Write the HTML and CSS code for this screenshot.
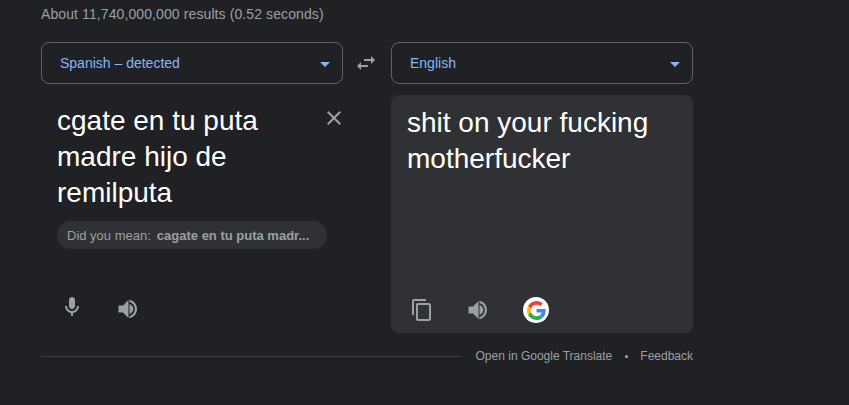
FILE: index.html
```html
<!DOCTYPE html>
<html>
<head>
  <title>Translate</title>
  <link rel="stylesheet" href="styles.css">
</head>
<body>
  <div class="container">
    <div class="result-stats">About 11,740,000,000 results (0.52 seconds)</div>

    <div class="lang-row">
      <div class="lang-box">
        <span>Spanish – detected</span>
        <span class="caret"></span>
      </div>
      <div class="swap">
        <svg width="24" height="24" viewBox="0 0 24 24"><path d="M6.99 11L3 15l3.99 4v-3H14v-2H6.99v-3zM21 9l-3.99-4v3H10v2h7.01v3L21 9z"/></svg>
      </div>
      <div class="lang-box">
        <span>English</span>
        <span class="caret"></span>
      </div>
    </div>

    <div class="panels">
      <div class="panel source">
        <div class="panel-text">
          <div class="big-text">cgate en tu puta madre hijo de remilputa</div>
          <button class="clear">
            <svg width="24" height="24" viewBox="0 0 24 24"><path d="M19 6.41L17.59 5 12 10.59 6.41 5 5 6.41 10.59 12 5 17.59 6.41 19 12 13.41 17.59 19 19 17.59 13.41 12z"/></svg>
          </button>
        </div>
        <div class="did-you-mean">
          <span class="dym-label">Did you mean:</span>
          <b class="dym-value">cagate en tu puta madr...</b>
        </div>
        <div class="panel-icons">
          <svg width="24" height="24" viewBox="0 0 24 24"><path d="M12 14c1.66 0 3-1.34 3-3V5c0-1.66-1.34-3-3-3S9 3.34 9 5v6c0 1.66 1.34 3 3 3z"/><path d="M17 11c0 2.76-2.24 5-5 5s-5-2.24-5-5H5c0 3.53 2.61 6.43 6 6.92V21h2v-3.08c3.39-.49 6-3.39 6-6.92h-2z"/></svg>
          <svg class="speaker" width="24" height="24" viewBox="0 0 24 24"><path d="M2.5 8.5v7h4.5l5.5 5.5V3L7 8.5H2.5zM13.5 7v10c2.2-.8 3.8-2.7 3.8-5s-1.6-4.2-3.8-5zM13.5 2.8v2.1c3.2.9 5.3 3.7 5.3 7.1s-2.1 6.2-5.3 7.1v2.1c4.4-.9 7.5-4.7 7.5-9.2s-3.1-8.3-7.5-9.2z"/></svg>
        </div>
      </div>

      <div class="panel target">
        <div class="big-text">shit on your fucking motherfucker</div>
        <div class="panel-icons">
          <svg width="24" height="24" viewBox="0 0 24 24"><path d="M16 1H4c-1.1 0-2 .9-2 2v14h2V3h12V1zm3 4H8c-1.1 0-2 .9-2 2v14c0 1.1.9 2 2 2h11c1.1 0 2-.9 2-2V7c0-1.1-.9-2-2-2zm0 16H8V7h11v14z"/></svg>
          <svg width="24" height="24" viewBox="0 0 24 24"><path d="M2.5 8.5v7h4.5l5.5 5.5V3L7 8.5H2.5zM13.5 7v10c2.2-.8 3.8-2.7 3.8-5s-1.6-4.2-3.8-5zM13.5 2.8v2.1c3.2.9 5.3 3.7 5.3 7.1s-2.1 6.2-5.3 7.1v2.1c4.4-.9 7.5-4.7 7.5-9.2s-3.1-8.3-7.5-9.2z"/></svg>
          <div class="g-badge">
            <svg width="19" height="19" viewBox="0 0 48 48">
              <path fill="#EA4335" d="M24 9.5c3.54 0 6.71 1.22 9.21 3.6l6.85-6.85C35.9 2.38 30.47 0 24 0 14.62 0 6.51 5.38 2.56 13.22l7.98 6.19C12.43 13.72 17.74 9.5 24 9.5z"/>
              <path fill="#4285F4" d="M46.98 24.55c0-1.57-.15-3.09-.38-4.55H24v9.02h12.94c-.58 2.96-2.26 5.48-4.78 7.18l7.73 6c4.51-4.18 7.09-10.36 7.09-17.65z"/>
              <path fill="#FBBC05" d="M10.53 28.59c-.48-1.45-.76-2.99-.76-4.59s.27-3.14.76-4.59l-7.98-6.19C.92 16.46 0 20.12 0 24c0 3.88.92 7.54 2.56 10.78l7.97-6.19z"/>
              <path fill="#34A853" d="M24 48c6.48 0 11.93-2.13 15.89-5.81l-7.73-6c-2.15 1.45-4.92 2.3-8.16 2.3-6.26 0-11.57-4.22-13.47-9.91l-7.98 6.19C6.51 42.62 14.62 48 24 48z"/>
            </svg>
          </div>
        </div>
      </div>
    </div>

    <div class="footer">
      <div class="footer-line"></div>
      <a class="footer-link">Open in Google Translate</a>
      <span class="dot"></span>
      <a class="footer-link">Feedback</a>
    </div>
  </div>
</body>
</html>
```

FILE: styles.css
```css
body {
  font-family: "Liberation Sans", Arial, sans-serif;
  background-color: #202124;
  margin: 0;
  padding: 0;
  overflow: hidden;
}

.container {
  width: 652px;
  margin-left: 41px;
}

.result-stats {
  height: 42px;
  padding-top: 6px;
  box-sizing: border-box;
  font-size: 14px;
  line-height: 17px;
  letter-spacing: 0.1px;
  color: #9aa0a6;
}

.lang-row {
  display: flex;
  justify-content: space-between;
  align-items: center;
  height: 42px;
  margin-bottom: 11px;
}

.lang-box {
  width: 302px;
  height: 42px;
  box-sizing: border-box;
  display: flex;
  align-items: center;
  justify-content: space-between;
  padding: 0 12px 0 18px;
  border: 1px solid #5f6368;
  border-radius: 8px;
  font-size: 14px;
  color: #8ab4f8;
}

.caret {
  width: 0;
  height: 0;
  border-left: 5px solid transparent;
  border-right: 5px solid transparent;
  border-top: 5px solid #8ab4f8;
  margin-top: 2px;
}

.swap {
  display: flex;
  fill: #9aa0a6;
  margin-right: 2px;
}

.panels {
  display: flex;
  justify-content: space-between;
  height: 238px;
}

.panel {
  width: 302px;
  box-sizing: border-box;
  border-radius: 8px;
  display: flex;
  flex-direction: column;
}

.target {
  background-color: #303134;
  padding: 10px 16px 0;
}

.source {
  padding: 8px 16px 0;
}

.panel-text {
  display: flex;
  justify-content: space-between;
  align-items: flex-start;
}

.big-text {
  font-size: 28px;
  line-height: 36px;
  color: #fff;
}

.source .big-text {
  width: 240px;
}

.clear {
  background: none;
  border: none;
  padding: 0;
  margin: 3px -19px 0 0;
  display: flex;
  fill: #9aa0a6;
}

.did-you-mean {
  width: 270px;
  height: 28px;
  margin: 10px 0 0;
  padding: 0 10px;
  box-sizing: border-box;
  display: flex;
  align-items: center;
  gap: 6px;
  border-radius: 14px;
  background-color: #303134;
  font-size: 13px;
  color: #9aa0a6;
  white-space: nowrap;
}

.dym-label {
  flex-shrink: 0;
}

.panel-icons {
  display: flex;
  align-items: center;
  gap: 32px;
  fill: #9aa0a6;
  margin-top: auto;
  padding: 0 0 12px 3px;
}

.speaker {
  margin-top: 4px;
}

.target .panel-icons {
  padding-bottom: 10px;
}

.g-badge {
  width: 26px;
  height: 26px;
  margin-left: 1px;
  border-radius: 50%;
  background-color: #fff;
  display: flex;
  align-items: center;
  justify-content: center;
}

.footer {
  display: flex;
  align-items: center;
  height: 46px;
  font-size: 12px;
  color: #9aa0a6;
  white-space: nowrap;
}

.footer-line {
  width: 420px;
  height: 1px;
  background-color: #3c4043;
  margin-right: 15px;
}

.footer-link {
  color: #9aa0a6;
}

.dot {
  width: 3px;
  height: 3px;
  border-radius: 50%;
  background-color: #8ab4f8;
  margin: 0 12px 0 13px;
}
```
